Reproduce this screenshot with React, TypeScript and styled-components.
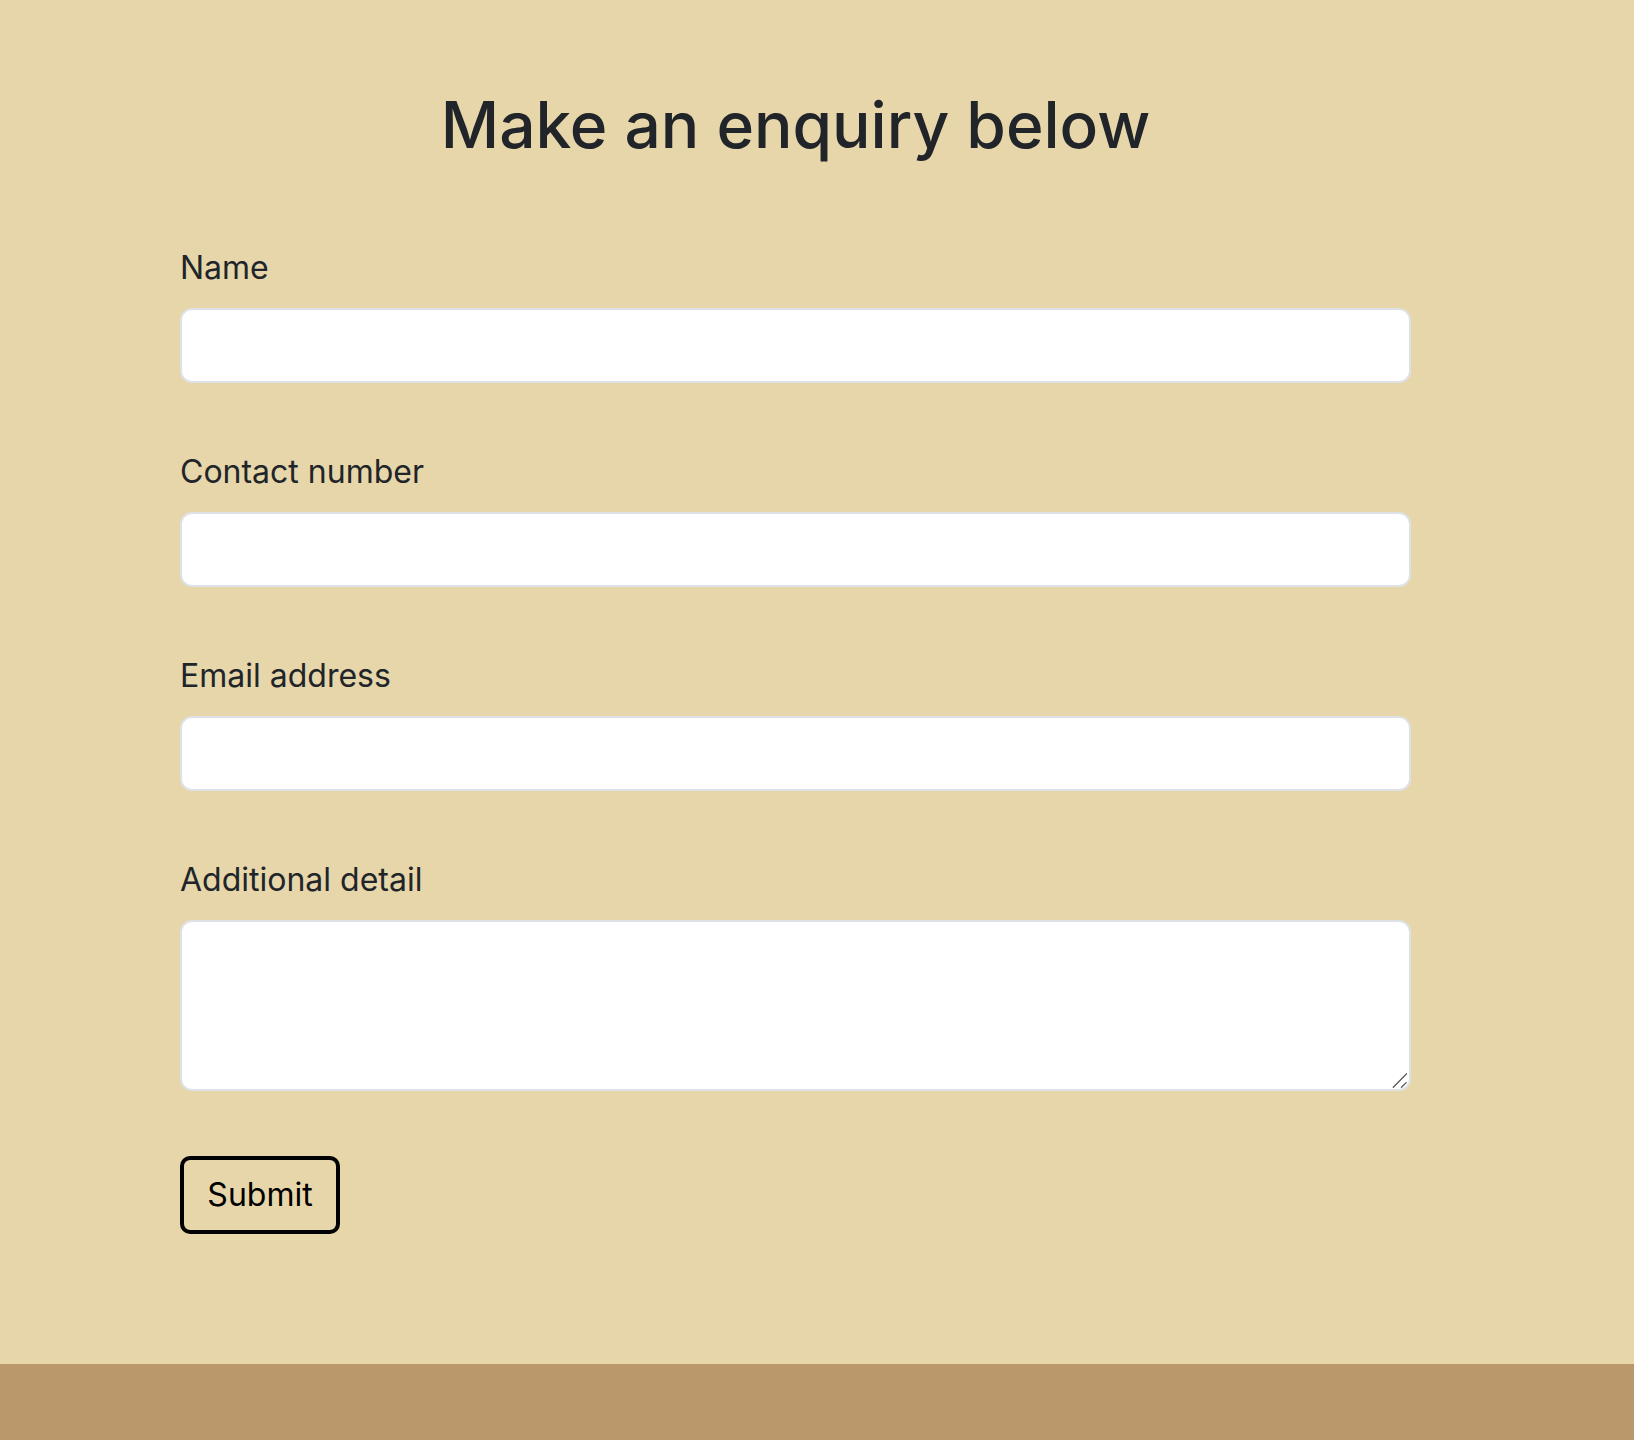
import React from "react";
import styled, { createGlobalStyle } from "styled-components";

const GlobalStyle = createGlobalStyle`
  html, body { margin: 0; padding: 0; }
  body {
    background: #e6d6aa;
    font-family: Inter, "Noto Sans", "Liberation Sans", sans-serif;
    color: #212529;
    -webkit-font-smoothing: antialiased;
  }
  * { box-sizing: border-box; }
`;

const Page = styled.div`
  display: flex;
  flex-direction: column;
  min-height: 1440px;
  background: #e6d6aa;
`;

const Main = styled.main`
  flex: 1;
  padding: 87px 0 129px 180px;
`;

const Container = styled.div`
  width: 1231px;
`;

const Title = styled.h1`
  margin: 0 0 80px;
  font-size: 64px;
  line-height: 1.2;
  font-weight: 500;
  text-align: center;
  color: #212529;
  letter-spacing: 0;
`;

const Form = styled.form`
  display: flex;
  flex-direction: column;
  gap: 65px;
`;

const Field = styled.div`
  display: flex;
  flex-direction: column;
  gap: 16px;
`;

const Label = styled.label`
  font-size: 32px;
  line-height: 48px;
  font-weight: 400;
  color: #212529;
`;

const Input = styled.input`
  display: block;
  width: 100%;
  height: 75px;
  border: 2px solid #dee2e6;
  border-radius: 12px;
  background: #fff;
  font-family: inherit;
  font-size: 32px;
  padding: 12px 24px;
  outline: none;
`;

const TextAreaWrap = styled.div`
  position: relative;
  width: 100%;
`;

const TextArea = styled.textarea`
  display: block;
  width: 100%;
  height: 171px;
  border: 2px solid #dee2e6;
  border-radius: 12px;
  background: #fff;
  font-family: inherit;
  font-size: 32px;
  padding: 12px 24px;
  outline: none;
  resize: none;
`;

const ResizeGrip = styled.svg`
  position: absolute;
  right: 4px;
  bottom: 3px;
  width: 16px;
  height: 16px;
  pointer-events: none;
`;

const SubmitButton = styled.button`
  align-self: flex-start;
  width: 160px;
  height: 78px;
  border: 4px solid #000;
  border-radius: 10px;
  background: transparent;
  color: #000;
  font-family: inherit;
  font-size: 32px;
  line-height: 48px;
  padding: 0;
  cursor: pointer;
`;

const Footer = styled.footer`
  height: 76px;
  background: #ba986b;
`;

export default function App() {
  return (
    <>
      <GlobalStyle />
      <Page>
        <Main>
          <Container>
            <Title>Make an enquiry below</Title>
            <Form onSubmit={(e) => e.preventDefault()}>
              <Field>
                <Label htmlFor="name">Name</Label>
                <Input id="name" type="text" />
              </Field>
              <Field>
                <Label htmlFor="phone">Contact number</Label>
                <Input id="phone" type="tel" />
              </Field>
              <Field>
                <Label htmlFor="email">Email address</Label>
                <Input id="email" type="email" />
              </Field>
              <Field>
                <Label htmlFor="detail">Additional detail</Label>
                <TextAreaWrap>
                  <TextArea id="detail" />
                  <ResizeGrip viewBox="0 0 16 16" aria-hidden="true">
                    <line x1="2.3" y1="15.3" x2="15.7" y2="1.6" stroke="#555" strokeWidth="1.3" strokeLinecap="round" />
                    <line x1="10.5" y1="15.3" x2="15.2" y2="10.6" stroke="#555" strokeWidth="1.3" strokeLinecap="round" />
                  </ResizeGrip>
                </TextAreaWrap>
              </Field>
              <SubmitButton type="submit">Submit</SubmitButton>
            </Form>
          </Container>
        </Main>
        <Footer />
      </Page>
    </>
  );
}
